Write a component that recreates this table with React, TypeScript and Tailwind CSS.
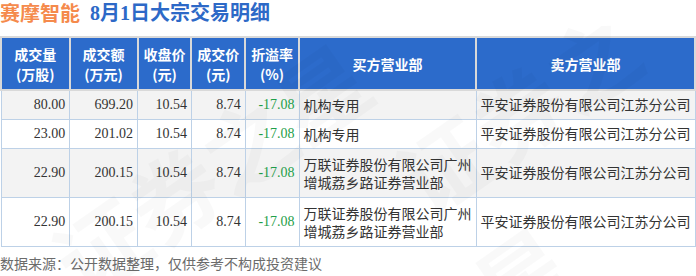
import React from "react"

const rows = [
  { vol: "80.00", amt: "699.20", close: "10.54", price: "8.74", rate: "-17.08", buy: ["机构专用"], sell: "平安证券股份有限公司江苏分公司" },
  { vol: "23.00", amt: "201.02", close: "10.54", price: "8.74", rate: "-17.08", buy: ["机构专用"], sell: "平安证券股份有限公司江苏分公司" },
  { vol: "22.90", amt: "200.15", close: "10.54", price: "8.74", rate: "-17.08", buy: ["万联证券股份有限公司广州", "增城荔乡路证券营业部"], sell: "平安证券股份有限公司江苏分公司" },
  { vol: "22.90", amt: "200.15", close: "10.54", price: "8.74", rate: "-17.08", buy: ["万联证券股份有限公司广州", "增城荔乡路证券营业部"], sell: "平安证券股份有限公司江苏分公司" },
]

const headers = [
  ["成交量", "(万股)"],
  ["成交额", "(万元)"],
  ["收盘价", "(元)"],
  ["成交价", "(元)"],
  ["折溢率", "(%)"],
  ["买方营业部"],
  ["卖方营业部"],
]

const sans = "font-['Noto_Sans_CJK_SC',sans-serif]"
const serif = "font-['Liberation_Serif','Noto_Sans_CJK_SC',serif]"

export default function App() {
  return (
    <div className={`relative h-[276px] w-[696px] overflow-hidden bg-white ${sans}`}>
      <div className="flex h-[36px] items-start gap-[10px] pt-[1px]">
        <span className="text-[20px] font-bold leading-[24px] text-[#f58a4c]">赛摩智能</span>
        <span className={`text-[20px] font-bold leading-[24px] text-[#2d69c7] ${serif}`}>8月1日大宗交易明细</span>
      </div>

      <table className="table-fixed border-collapse text-[14px]">
        <colgroup>
          <col className="w-[69px]" />
          <col className="w-[68px]" />
          <col className="w-[54px]" />
          <col className="w-[54px]" />
          <col className="w-[54px]" />
          <col className="w-[177px]" />
          <col className="w-[219px]" />
        </colgroup>
        <thead>
          <tr className="h-[53px] bg-[#2c6bcb]">
            {headers.map((h, i) => (
              <th key={i} className="border-2 border-[#d9d9d9] p-0 text-center text-[14px] font-semibold leading-[20px] text-white">
                {h.map((l, j) => (
                  <div key={j}>{l}</div>
                ))}
              </th>
            ))}
          </tr>
        </thead>
        <tbody className="text-[#333]">
          {rows.map((r, i) => {
            const bg = i % 2 === 0 ? "bg-[#f3f3f3]" : "bg-white"
            const h = r.buy.length > 1 ? "h-[49px]" : "h-[29px]"
            const num = `border border-[#bdd1e7] px-[4px] text-right ${serif} text-[14px]`
            return (
              <tr key={i} className={`${bg} ${h}`}>
                <td className={num}>{r.vol}</td>
                <td className={num}>{r.amt}</td>
                <td className={num}>{r.close}</td>
                <td className={num}>{r.price}</td>
                <td className={`${num} text-[#1fa04a]`}>{r.rate}</td>
                <td className="whitespace-nowrap border border-[#bdd1e7] pl-[4px] pr-0 text-left leading-[18px]">
                  {r.buy.map((l, j) => (
                    <div key={j}>{l}</div>
                  ))}
                </td>
                <td className="whitespace-nowrap border border-[#bdd1e7] p-0 text-center">{r.sell}</td>
              </tr>
            )
          })}
        </tbody>
      </table>

      <div className="mt-[7px] text-[14px] leading-[18px] text-[#6b6b6b]">数据来源：公开数据整理，仅供参考不构成投资建议</div>

      <div className="pointer-events-none absolute inset-0 select-none">
        <span className="absolute left-[30px] top-[100px] -rotate-[35deg] text-[90px] font-bold text-black/[0.025]">证券之星</span>
        <span className="absolute left-[420px] top-[30px] -rotate-[35deg] text-[90px] font-bold text-black/[0.025]">证券之星</span>
      </div>
    </div>
  )
}
